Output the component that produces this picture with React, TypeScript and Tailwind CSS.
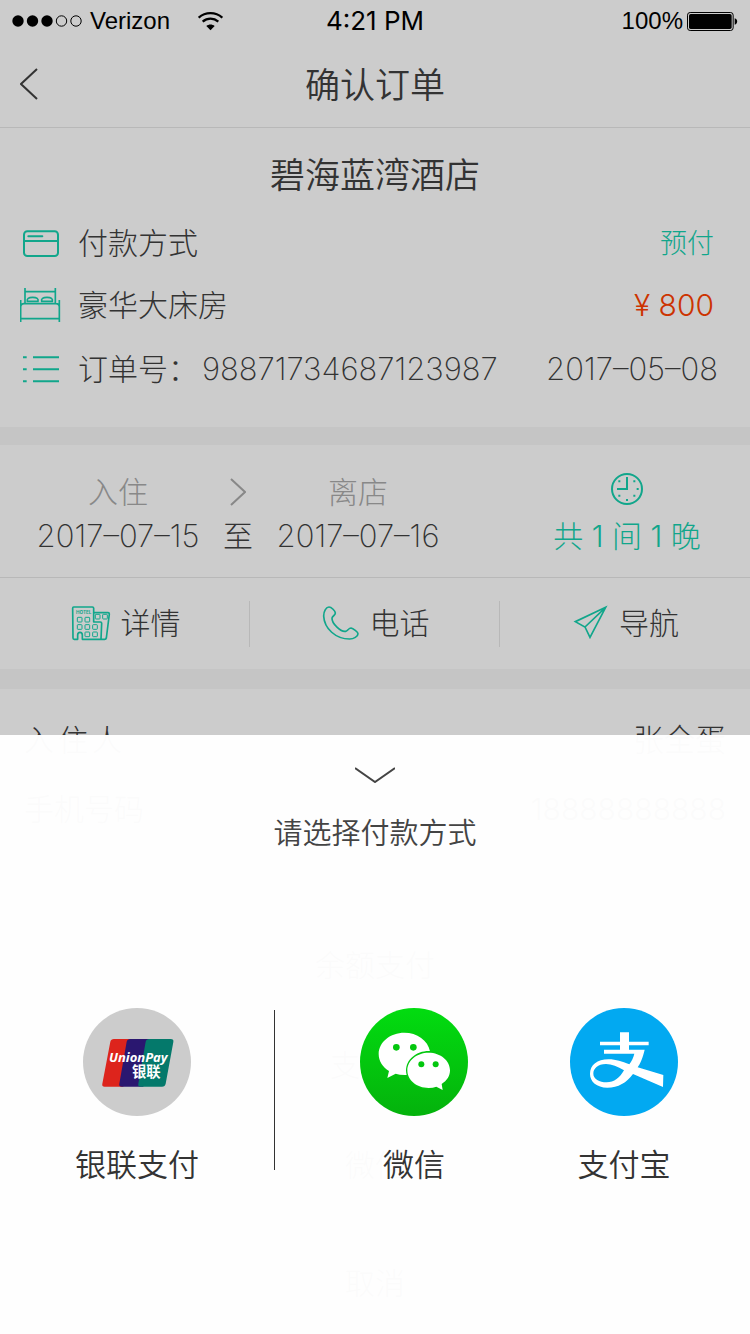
import React from 'react';

const GREEN = '#11a68b';

function WifiIcon() {
  return (
    <svg viewBox="0 0 75 57" className="h-[19px] w-[25px]" fill="none" stroke="#000" strokeWidth="7" aria-hidden="true">
      <path d="M2 17 C22 -1 53 -1 73 17" />
      <path d="M14 29 C28 17 47 17 61 29" />
      <path d="M37.500 55 L25 42 C32 36 43 36 50 42 Z" fill="#000" stroke="none" />
    </svg>
  );
}

function BatteryIcon() {
  return (
    <svg viewBox="0 0 153 57" className="h-[19px] w-[51px]" aria-label="电量">
      <rect x="1.500" y="1.500" width="137" height="54" rx="8" fill="none" stroke="#000" strokeWidth="3" />
      <rect x="6" y="6" width="128" height="45" rx="5" />
      <path d="M143 19 C153 21 153 36 143 38 Z" />
    </svg>
  );
}

function CardIcon() {
  return (
    <svg viewBox="0 0 108 81" className="h-[27px] w-9" fill="none" stroke={GREEN} strokeWidth="6" aria-hidden="true">
      <rect x="3" y="4" width="102" height="74" rx="10" />
      <path d="M3 33H105" />
      <path d="M16 19H58" strokeLinecap="round" />
    </svg>
  );
}

function BedIcon() {
  return (
    <svg viewBox="60 441 126 108" className="h-9 w-[42px]" fill="none" stroke={GREEN} strokeWidth="5" aria-hidden="true">
      <path d="M62 480V546M178 480V546M62 536H178M62 501q0-10 10-10H168q10 0 10 10M75 444V491M166 444V491M75 455H166" />
      <path d="M82 484q-3-12 16-12t16 12ZM125 484q-3-12 16-12t16 12Z" />
    </svg>
  );
}

function ListIcon() {
  return (
    <svg viewBox="0 0 108 81" className="h-[27px] w-9" stroke={GREEN} strokeWidth="6" aria-hidden="true">
      <path d="M0 4H11M30 4H108M0 40H11M30 40H108M0 76H11M30 76H108" />
    </svg>
  );
}

function ClockIcon() {
  return (
    <svg viewBox="705 36 102 102" className="h-[34px] w-[34px]" fill="none" stroke={GREEN} strokeWidth="6" aria-hidden="true">
      <circle cx="756" cy="87" r="45" />
      <path d="M756 51V87H726" />
      <path d="M753 120h6M785 87h6M730 64h6M775 64h6M730 107h6M775 107h6" />
    </svg>
  );
}

function HotelIcon() {
  return (
    <svg viewBox="213 435 120 108" className="h-9 w-10" fill="none" stroke={GREEN} strokeWidth="5" strokeLinejoin="round" aria-hidden="true">
      <path d="M221 441H277q4 0 4 4V458H324q4 0 4 4L319 534q-1 4-5 4H247V525q0-8-7-8t-7 8V538H223q-4 0-4-4L218 445q0-4 3-4Z" />
      <path d="M281 458V486H301q4 0 4 4L303 538" />
      <g strokeWidth="3">
        <rect x="232" y="472" width="14" height="14" rx="2" />
        <rect x="255" y="472" width="14" height="14" rx="2" />
        <rect x="232" y="494" width="14" height="14" rx="2" />
        <rect x="255" y="494" width="14" height="14" rx="2" />
        <rect x="278" y="494" width="14" height="14" rx="2" />
        <rect x="255" y="516" width="14" height="14" rx="2" />
        <rect x="278" y="516" width="14" height="14" rx="2" />
        <rect x="286" y="463" width="14" height="14" rx="2" />
        <rect x="308" y="463" width="14" height="14" rx="2" />
      </g>
      <text x="228" y="462" fontSize="14" fontWeight="700" fontFamily="Inter, sans-serif" fill={GREEN} stroke="none">HOTEL</text>
    </svg>
  );
}

function PhoneIcon() {
  return (
    <svg viewBox="965 434 114 108" className="h-9 w-[38px]" fill="none" stroke={GREEN} strokeWidth="5" strokeLinejoin="round" aria-hidden="true">
      <path d="M986 440C978 440 970 452 970 467C972 505 1006 536 1048 536C1060 536 1073 528 1073 520C1073 515 1058 504 1052 503C1045 503 1042 512 1036 513C1022 516 994 490 995 473C996 466 1005 466 1005 458C1005 452 993 440 986 440Z" />
    </svg>
  );
}

function PlaneIcon() {
  return (
    <svg viewBox="595 434 108 108" className="h-9 w-9" fill="none" stroke={GREEN} strokeWidth="5" aria-hidden="true">
      <path d="M693 441L602 484L631 500L646 531ZM631 500L693 441" />
    </svg>
  );
}

function UnionPayLogo() {
  return (
    <svg viewBox="69 54 324 324" className="h-[108px] w-[108px]" aria-hidden="true">
      <circle cx="231" cy="216" r="162" fill="#ccc" />
      <path d="M162 147H215L190 290H134q-9 0-7-9L151 155q2-8 11-8Z" fill="#dd241c" />
      <path d="M211 147H275L250 290H185q-9 0-7-9L200 155q2-8 11-8Z" fill="#2a1770" />
      <path d="M268 147H332q10 0 8 9L317 281q-2 9-11 9H242q-9 0-7-9L257 155q2-8 11-8Z" fill="#04796b" />
      <text x="147" y="216" fontSize="39" fontWeight="700" fontStyle="italic" fontFamily="'Noto Sans', sans-serif" fill="#fff">UnionPay</text>
      <text x="216" y="261" fontSize="43" fontWeight="700" fontFamily="'Noto Sans CJK SC', sans-serif" fill="#fff">银联</text>
    </svg>
  );
}

function WeChatLogo() {
  return (
    <svg viewBox="120 234 324 324" className="h-[108px] w-[108px]" aria-hidden="true">
      <defs>
        <linearGradient id="wechat-green" x1="0" y1="0" x2="0" y2="1">
          <stop offset="0" stopColor="#02dc10" />
          <stop offset="1" stopColor="#04b20c" />
        </linearGradient>
      </defs>
      <circle cx="282" cy="396" r="162" fill="url(#wechat-green)" />
      <path d="M253 308C211 308 176 336 176 372C176 393 188 411 207 423L202 444L227 431Q240 436 262 435L330 364C324 331 291 308 253 308Z" fill="#fff" />
      <path d="M326 363C289 363 258 389 258 421C258 454 289 479 326 479L392 421C392 389 363 363 326 363Z" fill="#03c70e" />
      <path d="M326 368C290 368 262 392 262 421C262 451 290 474 326 474Q339 474 349 470L368 480L365 462C381 452 390 438 390 421C390 392 362 368 326 368Z" fill="#fff" />
      <g fill="#03c70e">
        <circle cx="229" cy="352" r="10" />
        <circle cx="280" cy="352" r="10" />
        <circle cx="304" cy="403" r="9" />
        <circle cx="347" cy="403" r="9" />
      </g>
    </svg>
  );
}

function AlipayLogo() {
  return (
    <svg viewBox="750 234 324 324" className="h-[108px] w-[108px]" aria-hidden="true">
      <circle cx="912" cy="396" r="162" fill="#02a9f1" />
      <g fill="#fff">
        <path d="M900 307H927V335H986V346H927V360H900V346H840V335H900Z" />
        <path
          fillRule="evenodd"
          d="M852 359H974C968 385 961 400 953 412L1030 435L1029 471L939 432C920 458 895 473 862 473C830 473 810 455 810 432C810 405 832 388 865 388C890 388 905 395 928 403C935 394 940 383 943 371H852ZM912 421C893 410 875 402 858 402C833 402 820 416 820 431C820 447 838 457 860 457C882 457 900 443 912 421Z"
        />
      </g>
    </svg>
  );
}

function StatusBar() {
  return (
    <div className="grid h-10 grid-cols-3 items-center px-3 pt-0.5 text-2xl text-black">
      <div className="flex items-center">
        <svg viewBox="0 0 70 12" className="mr-2 h-3 w-[70px]" aria-hidden="true">
          <circle cx="6" cy="6" r="5.700" />
          <circle cx="20.500" cy="6" r="5.700" />
          <circle cx="35" cy="6" r="5.700" />
          <circle cx="49.500" cy="6" r="5.200" fill="none" stroke="#000" />
          <circle cx="64" cy="6" r="5.200" fill="none" stroke="#000" />
        </svg>
        <span className="mr-7 font-['Liberation_Sans',sans-serif]">Verizon</span>
        <WifiIcon />
      </div>
      <span className="text-center text-[26px] font-normal">4:21 PM</span>
      <div className="flex items-center justify-end gap-1 font-['Liberation_Sans',sans-serif]">
        <span>100%</span>
        <BatteryIcon />
      </div>
    </div>
  );
}

function InfoRow({ icon, label, children }: { icon: React.ReactNode; label: string; children: React.ReactNode }) {
  return (
    <div className="flex items-center pr-9 pl-5">
      <span className="flex w-[58px] shrink-0 items-center">{icon}</span>
      <span>{label}</span>
      <span className="ml-auto">{children}</span>
    </div>
  );
}

function PayOption({ logo, label }: { logo: React.ReactNode; label: string }) {
  return (
    <button type="button" className="flex flex-col items-center gap-[25px]">
      {logo}
      <span className="text-[31px] leading-[48px] font-[350]">{label}</span>
    </button>
  );
}

const actions = [
  { label: '详情', icon: <HotelIcon /> },
  { label: '电话', icon: <PhoneIcon /> },
  { label: '导航', icon: <PlaneIcon /> },
];

export default function App() {
  return (
    <div className="relative min-h-screen overflow-hidden bg-[#ccc] font-['Inter','Noto_Sans_CJK_SC',sans-serif] text-[30px] leading-10 font-light text-[#333]">
      <StatusBar />

      <header className="grid h-[88px] grid-cols-[60px_1fr_60px] items-center border-b border-[#b8b8b8]">
        <button type="button" aria-label="返回" className="pl-5">
          <svg viewBox="0 0 18 32" className="h-8 w-[18px]" fill="none" stroke="#333" strokeWidth="2">
            <path d="M17 1L1 16L17 31" />
          </svg>
        </button>
        <h1 className="pt-0.5 text-center text-[35px] font-[350]">确认订单</h1>
      </header>

      <main>
        <section className="h-[299px] pt-6">
          <h2 className="text-center text-[35px] leading-[46px] font-[350]">碧海蓝湾酒店</h2>
          <div className="mt-6 flex flex-col gap-[21px]">
            <InfoRow icon={<span className="pl-[3px]"><CardIcon /></span>} label="付款方式">
              <span className="text-[27px] text-[#11a68b]">预付</span>
            </InfoRow>
            <InfoRow icon={<BedIcon />} label="豪华大床房">
              <span className="text-[#cc3300]">¥ 800</span>
            </InfoRow>
          </div>
          <div className="mt-6 flex items-center justify-between pr-8 pl-5">
            <div className="flex items-center">
              <span className="w-[58px] pl-[3px]"><ListIcon /></span>
              <span>订单号：</span>
              <span className="ml-1 text-[31px] font-[250]">98871734687123987</span>
            </div>
            <time className="text-[31px] font-[250]">2017–05–08</time>
          </div>
        </section>

        <section className="border-t-[18px] border-[#c5c5c5]">
          <div className="flex h-[133px] items-center border-b border-[#b8b8b8]">
            <div className="grid w-2/3 grid-cols-[172px_68px_172px] gap-y-1 pt-1.5 pl-8 text-center">
              <span className="text-[#888]">入住</span>
              <svg viewBox="0 0 16 28" className="h-7 w-4 self-center justify-self-center" fill="none" stroke="#888" strokeWidth="2" aria-hidden="true">
                <path d="M1 1L15 14L1 27" />
              </svg>
              <span className="text-[#888]">离店</span>
              <time className="text-[31px] font-[250]">2017–07–15</time>
              <span>至</span>
              <time className="text-[31px] font-[250]">2017–07–16</time>
            </div>
            <div className="flex w-1/3 flex-col items-center gap-2.5 pt-1.5 pl-1 text-[#11a68b]">
              <ClockIcon />
              <span>共 1 间 1 晚</span>
            </div>
          </div>
          <nav className="grid h-[91px] grid-cols-3 items-center">
            {actions.map(({ label, icon }) => (
              <button key={label} type="button" className="flex h-[46px] items-center justify-center gap-2.5 border-r border-[#b8b8b8] pb-0.5 pl-0.5 last:border-r-0">
                {icon}
                <span>{label}</span>
              </button>
            ))}
          </nav>
        </section>

        <section className="border-t-[20px] border-[#c5c5c5] px-6 pt-[31px]">
          <div className="flex h-[69px] items-start justify-between">
            <span className="flex gap-1">
              <span>入</span>
              <span>住</span>
              <span>人</span>
            </span>
            <span className="text-[31px]">张全蛋</span>
          </div>
          <div className="flex h-[69px] items-start justify-between">
            <span>手机号码</span>
            <span>18888888888</span>
          </div>
        </section>
      </main>

      <div className="mt-[57px] text-center leading-[100px]">
        <p>余额支付</p>
        <p>支付宝</p>
        <p>微信</p>
        <p className="mt-[18px]">取消</p>
      </div>

      <div role="dialog" aria-labelledby="pay-title" className="absolute inset-x-0 top-[735px] bottom-0 bg-white/98">
        <div className="flex flex-col items-center pt-8">
          <button type="button" aria-label="收起" className="block">
            <svg viewBox="0 0 40 16" className="block h-4 w-10" fill="none" stroke="#444" strokeWidth="2">
              <path d="M0 1L20 15L40 1" />
            </svg>
          </button>
          <h2 id="pay-title" className="mt-[31px] text-[29px] font-[350] text-[#444]">请选择付款方式</h2>
        </div>
        <div className="mt-[154px] flex items-start">
          <div className="flex w-[274px] justify-center">
            <PayOption logo={<UnionPayLogo />} label="银联支付" />
          </div>
          <div className="mt-0.5 h-40 w-px bg-[#333]" />
          <div className="grid flex-1 grid-cols-2 pr-[21px] pl-[34px]">
            <PayOption logo={<WeChatLogo />} label="微信" />
            <PayOption logo={<AlipayLogo />} label="支付宝" />
          </div>
        </div>
      </div>
    </div>
  );
}
